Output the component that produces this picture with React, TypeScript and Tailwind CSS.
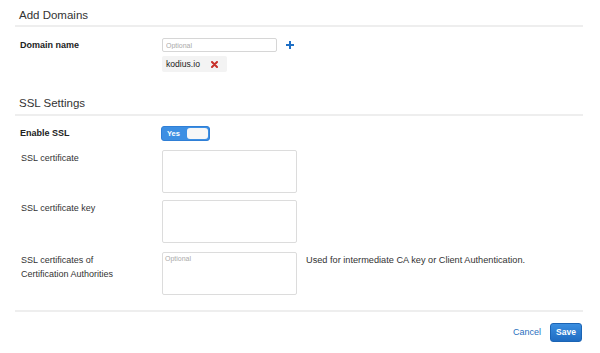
import React from 'react';

const font = { fontFamily: '"Liberation Sans", Arial, sans-serif' };

function PlusIcon() {
  return (
    <svg width="8" height="8" viewBox="0 0 8 8">
      <path d="M3 0h2v3h3v2H5v3H3V5H0V3h3z" fill="#1f6fc5" />
    </svg>
  );
}

function RemoveIcon() {
  return (
    <svg width="7" height="7" viewBox="0 0 7 7">
      <path d="M1 1L6 6M6 1L1 6" stroke="#c7302a" strokeWidth="2" strokeLinecap="round" />
    </svg>
  );
}

function Row({ label, bold, children }: { label: React.ReactNode; bold?: boolean; children: React.ReactNode }) {
  return (
    <div className="flex">
      <div
        className={`w-[147px] shrink-0 pl-[5px] ${
          bold ? 'text-[9px] font-bold leading-[14px] text-[#222]' : 'pl-[6px] pt-[1px] text-[9px] leading-[14px] text-[#333]'
        }`}
      >
        {label}
      </div>
      {children}
    </div>
  );
}

function TextArea({ placeholder }: { placeholder?: string }) {
  return (
    <textarea
      placeholder={placeholder}
      className="h-[43px] w-[135px] resize-none rounded-[2px] border border-[#dcdcdc] bg-white px-[2px] py-[1px] text-[7px] leading-[9px] outline-none placeholder:text-[#aaa]"
    />
  );
}

export default function App() {
  return (
    <div className="h-[353px] w-[600px] bg-white px-[15px]" style={font}>
      <div className="w-[568px]">
        <h2 className="border-b-2 border-[#eeeeee] pb-[3px] pl-[4px] pt-[8px] text-[11.5px] leading-[14px] text-[#333]">
          Add Domains
        </h2>

        <div className="mt-[11px]">
          <Row label="Domain name" bold>
            <div>
              <div className="flex items-center">
                <input
                  placeholder="Optional"
                  className="h-[14px] w-[115px] rounded-[2px] border border-[#d6d6d6] px-[3px] text-[7px] outline-none placeholder:text-[#aaa]"
                />
                <span className="ml-[9px] flex">
                  <PlusIcon />
                </span>
              </div>
              <div className="mt-[4px] flex h-[16px] w-[65px] items-center rounded-[2px] bg-[#f3f3f3] pl-[4px] text-[8.6px] text-[#222]">
                kodius.io
                <span className="ml-[11px] flex">
                  <RemoveIcon />
                </span>
              </div>
            </div>
          </Row>
        </div>

        <h2 className="mt-[24px] border-b-2 border-[#eeeeee] pb-[4px] pl-[4px] text-[11.5px] leading-[14px] text-[#333]">
          SSL Settings
        </h2>

        <div className="mt-[10px]">
          <Row label="Enable SSL" bold>
            <div className="ml-[-1px] flex h-[15px] w-[49px] items-center rounded-[3px] border border-[#2f7fd6] bg-[#3d8fe3] pl-[5px] pr-[1px]">
              <span className="text-[7.5px] font-bold leading-none text-white">Yes</span>
              <span className="ml-auto h-[11px] w-[21px] rounded-[3px] bg-[#f7f7f7]" />
            </div>
          </Row>
        </div>

        <div className="mt-[9px]">
          <Row label="SSL certificate">
            <TextArea />
          </Row>
        </div>

        <div className="mt-[7px]">
          <Row label="SSL certificate key">
            <TextArea />
          </Row>
        </div>

        <div className="mt-[9px]">
          <Row
            label={
              <>
                SSL certificates of
                <br />
                Certification Authorities
              </>
            }
          >
            <TextArea placeholder="Optional" />
            <p className="ml-[9px] pt-[1px] text-[9.2px] leading-[14px] text-[#333]">
              Used for intermediate CA key or Client Authentication.
            </p>
          </Row>
        </div>

        <div className="mt-[15px] border-b-2 border-[#eeeeee]" />

        <div className="mt-[11px] flex items-center justify-end gap-[9px] pr-[1px]">
          <button className="text-[9px] text-[#2a6fc0]">Cancel</button>
          <button className="h-[19px] w-[32px] rounded-[3px] border border-[#1b64b4] bg-gradient-to-b from-[#3a8ee0] to-[#1f6cc2] text-[8.5px] font-bold text-white">
            Save
          </button>
        </div>
      </div>
    </div>
  );
}
